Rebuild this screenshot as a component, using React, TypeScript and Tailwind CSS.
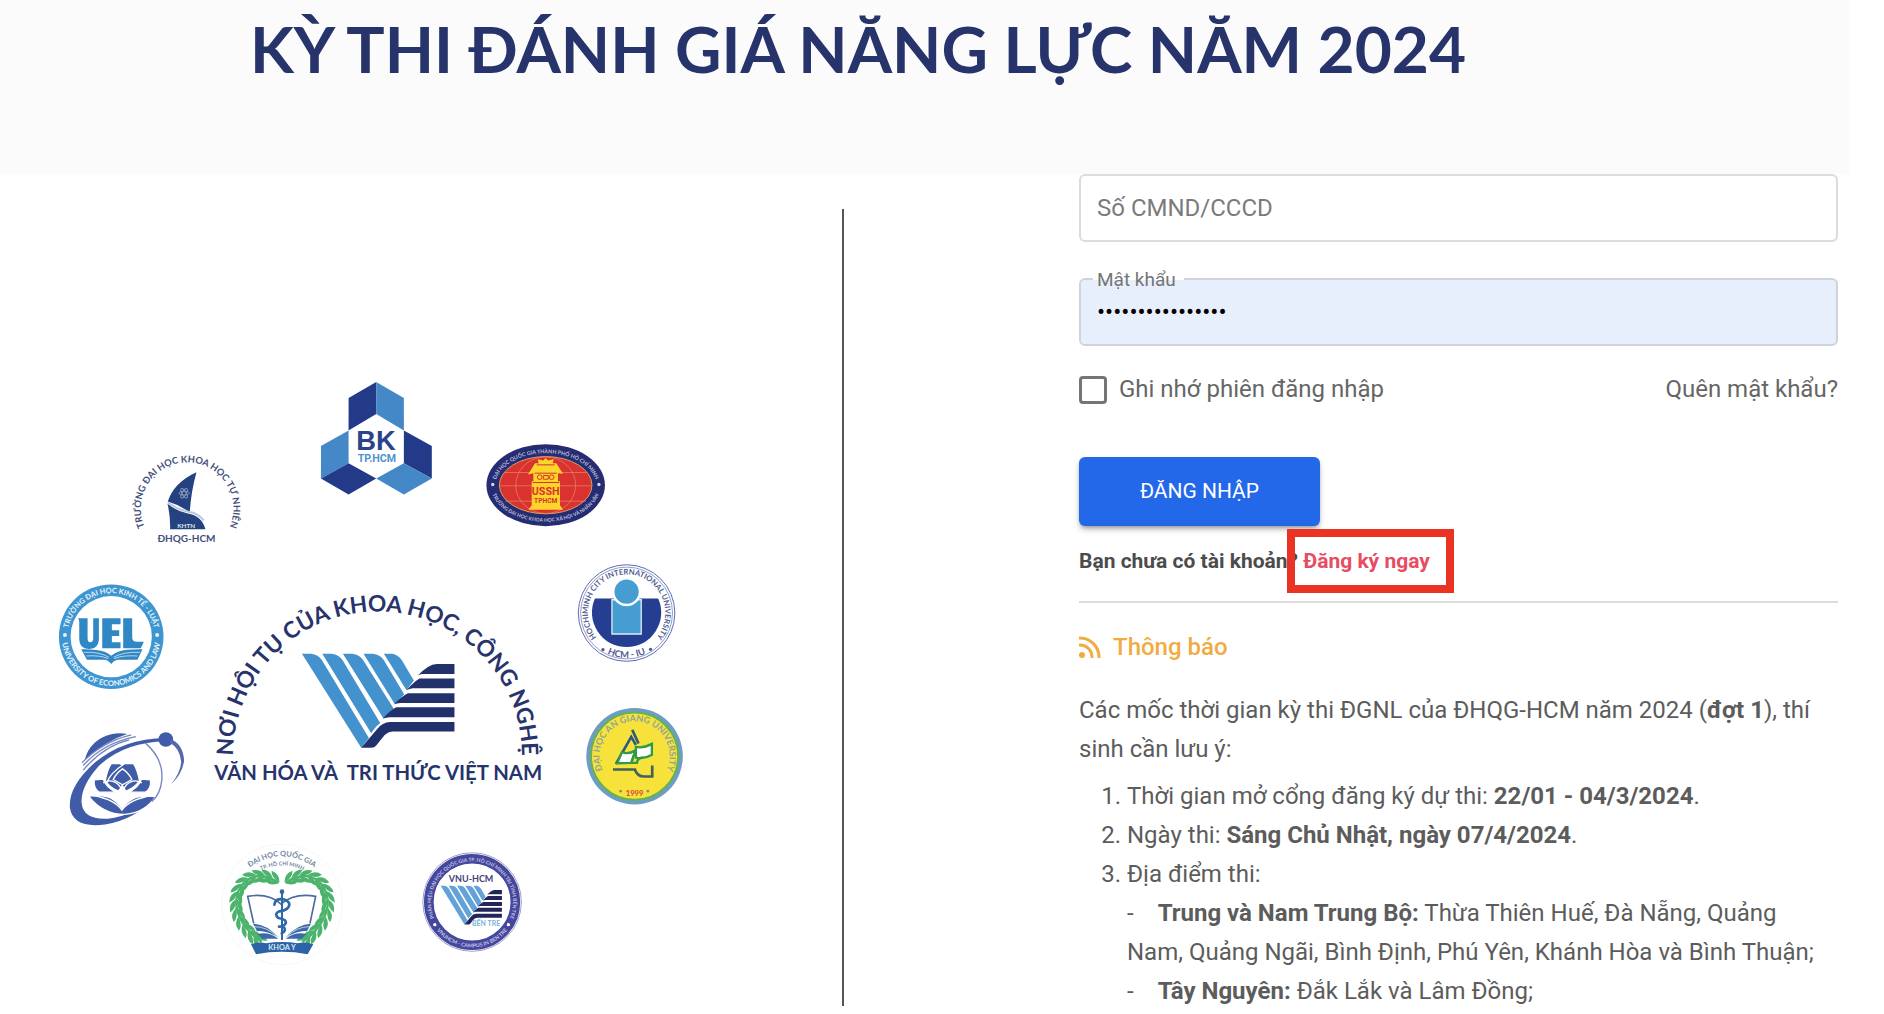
import { useState, type FormEvent, type ReactNode } from 'react';

interface PlaceProps {
  x: number;
  y: number;
  children: ReactNode;
}

// Every logo is drawn on a grid three times finer than the emblem board
function Place({ x, y, children }: PlaceProps) {
  return <g transform={`translate(${x} ${y}) scale(${1 / 3})`}>{children}</g>;
}

interface ArcTextProps {
  id: string;
  d: string;
  size: number;
  fill: string;
  children: string;
}

function ArcText({ id, d, size, fill, children }: ArcTextProps) {
  return (
    <>
      <path id={id} d={d} fill="none" />
      <text fontSize={size} fill={fill} fontWeight={700} textAnchor="middle">
        <textPath href={`#${id}`} startOffset="50%">{children}</textPath>
      </text>
    </>
  );
}

function VnuMark({ light = '#4391cd', dark = '#22306b' }: { light?: string; dark?: string }) {
  return (
    <>
      <g fill={light}>
        <path d="M307 252H334Q356 254 367 272L508 505L485 535Z" />
        <path d="M368 252H396Q418 254 429 272L542 460Q528 470 515 491Z" />
        <path d="M430 252H458Q480 254 491 272L584 420L552 447Z" />
        <path d="M492 252H520Q542 254 553 272L614 374L586 404Z" />
        <path d="M553 252H578Q596 255 607 272L643 333L621 362Z" />
      </g>
      <g fill={dark}>
        <path d="M655 318Q686 284 712 283H765V313H668Q662 314 655 318Z" />
        <path d="M621 362Q642 338 660 327H765V356H640Q630 357 621 362Z" />
        <path d="M584 404Q604 382 625 371H765V400H602Q592 401 584 404Z" />
        <path d="M550 447Q570 424 590 413H765V443H570Q560 444 550 447Z" />
        <path d="M485 535L533 478Q548 458 572 457H765V486H580Q560 488 550 503L530 528Q525 535 515 535Z" />
      </g>
    </>
  );
}

function BachKhoa() {
  return (
    <Place x={300} y={370}>
      <path d="M230 36L147 84V182L230 132Z" fill="#233a88" />
      <path d="M230 36L313 84V182L230 132Z" fill="#4488c8" />
      <path d="M64 228L147 182V280L64 326Z" fill="#4488c8" />
      <path d="M64 326L147 280L230 326L147 374Z" fill="#233a88" />
      <path d="M313 182L397 228V326L313 280Z" fill="#233a88" />
      <path d="M230 326L313 280L397 326L313 374Z" fill="#4488c8" />
      <text x="229" y="240" fontSize="82" fontWeight="700" fill="#2b4488" textAnchor="middle" fontFamily="Liberation Sans, sans-serif">BK</text>
      <text x="232" y="277" fontSize="32" fontWeight="700" fill="#4c93cc" textAnchor="middle" fontFamily="Roboto, sans-serif">TP.HCM</text>
    </Place>
  );
}

function NaturalSciences() {
  return (
    <Place x={110} y={430}>
      <ArcText id="khtn" d="M118 316A139 139 0 1 1 346 316" size={28} fill="#414e7c">TRƯỜNG ĐẠI HỌC KHOA HỌC TỰ NHIÊN</ArcText>
      <path d="M260 127Q192 158 174 215Q212 226 240 248Q243 190 260 127Z" fill="#24427f" />
      <path d="M173 222Q200 244 234 251Q276 258 287 298H181Q182 258 173 222Z" fill="#24427f" />
      <path d="M174 217Q200 238 236 246Q265 250 282 272" fill="none" stroke="#b9c6dc" strokeWidth="6" />
      <g fill="none" stroke="#8496ba" strokeWidth="3">
        <ellipse cx="223" cy="190" rx="16" ry="6" />
        <ellipse cx="223" cy="190" rx="16" ry="6" transform="rotate(60 223 190)" />
        <ellipse cx="223" cy="190" rx="16" ry="6" transform="rotate(120 223 190)" />
      </g>
      <text x="229" y="294" fontSize="19" fontWeight="700" fill="#dfe6f0" textAnchor="middle">KHTN</text>
      <text x="230" y="336" fontSize="30" fontWeight="700" fill="#414e7c" textAnchor="middle">ĐHQG-HCM</text>
    </Place>
  );
}

function SocialSciences() {
  return (
    <Place x={470} y={430}>
      <ellipse cx="229" cy="166" rx="178" ry="123" fill="#252c72" />
      <ellipse cx="229" cy="166" rx="139" ry="86" fill="#d9322f" stroke="#cfa16a" strokeWidth="3" />
      <g fill="none" stroke="#ea8b6c" strokeWidth="2">
        <ellipse cx="229" cy="166" rx="90" ry="85" />
        <path d="M105 128H353M91 168H367M108 214H350" />
      </g>
      <ArcText id="ussh-top" d="M78 166A151 96 0 0 1 380 166" size={16} fill="#b9bfdd">ĐẠI HỌC QUỐC GIA THÀNH PHỐ HỒ CHÍ MINH</ArcText>
      <ArcText id="ussh-bottom" d="M64 166A165 110 0 0 0 394 166" size={15} fill="#b9bfdd">TRƯỜNG ĐẠI HỌC KHOA HỌC XÃ HỘI VÀ NHÂN VĂN</ArcText>
      <circle cx="70" cy="164" r="5" fill="#d6d9ec" />
      <circle cx="389" cy="164" r="5" fill="#d6d9ec" />
      <path d="M205 88L222 92L229 84L236 92L253 88L250 100H261L281 132L266 130V154H272V226L281 240H177L187 226V154H192V130L176 134L197 100H208Z" fill="#fbd529" />
      <g fill="none" stroke="#d9322f" strokeWidth="3">
        <circle cx="211" cy="142" r="7" />
        <circle cx="247" cy="142" r="7" />
        <path d="M222 137H237V148H222ZM190 158H270M196 130H262M202 105H256" />
      </g>
      <text x="229" y="197" fontSize="32" fontWeight="700" fill="#d9322f" textAnchor="middle" fontFamily="Roboto, sans-serif">USSH</text>
      <text x="229" y="220" fontSize="20" fontWeight="700" fill="#d9322f" textAnchor="middle" fontFamily="Roboto, sans-serif">TPHCM</text>
    </Place>
  );
}

function International() {
  return (
    <Place x={560} y={550}>
      <circle cx="202" cy="190" r="145" fill="#fff" stroke="#5b6cb4" strokeWidth="3" />
      <circle cx="202" cy="190" r="138" fill="none" stroke="#5b6cb4" strokeWidth="2" />
      <path d="M107 146H297A104 104 0 1 1 107 146Z" fill="#263e91" />
      <path d="M158 150H246V253H158Z" fill="#469dd2" stroke="#d8edf5" strokeWidth="4" />
      <circle cx="202" cy="126" r="40" fill="#469dd2" stroke="#fff" strokeWidth="7" />
      <ArcText id="iu-top" d="M121 273A116 116 0 1 1 283 273" size={23} fill="#505b91">HOCHIMINH CITY INTERNATIONAL UNIVERSITY</ArcText>
      <ArcText id="iu-bottom" d="M100 278A134 134 0 0 0 304 278" size={28} fill="#505b91">HCM - IU</ArcText>
      <circle cx="131" cy="300" r="5" fill="#505b91" />
      <circle cx="274" cy="299" r="5" fill="#505b91" />
    </Place>
  );
}

function AnGiang() {
  return (
    <Place x={570} y={700}>
      <circle cx="196" cy="170" r="145" fill="#6c9dc6" />
      <circle cx="196" cy="170" r="131" fill="#f7e23b" stroke="#67b34a" strokeWidth="6" />
      <ArcText id="agu" d="M129 251A105 105 0 1 1 263 251" size={27} fill="#8fa598">ĐẠI HỌC AN GIANG UNIVERSITY</ArcText>
      <path d="M140 193L186 112L200 136" fill="none" stroke="#2d5b7a" strokeWidth="8" />
      <path d="M189 91L208 132" stroke="#2d5b7a" strokeWidth="8" />
      <path d="M144 191L158 158Q178 166 199 152L186 190Z" fill="#fff" stroke="#2f9a48" strokeWidth="7" />
      <path d="M200 142Q222 147 248 133V166Q225 180 200 174Z" fill="#fff" stroke="#2f9a48" strokeWidth="7" />
      <path d="M199 152L186 190H203Q205 174 222 174" fill="none" stroke="#2f9a48" strokeWidth="7" />
      <path d="M131 210H197Q204 231 224 231H249V198" fill="none" stroke="#44605a" strokeWidth="8" />
      <text x="196" y="289" fontSize="23" fontWeight="700" fill="#d5433a" textAnchor="middle">1999</text>
      <circle cx="154" cy="275" r="4" fill="#8c9158" />
      <circle cx="236" cy="275" r="4" fill="#8c9158" />
    </Place>
  );
}

function EconomicsLaw() {
  return (
    <Place x={40} y={570}>
      <circle cx="214" cy="201" r="157" fill="#3e96d1" />
      <circle cx="214" cy="201" r="122" fill="#fff" />
      <ArcText id="uel-top" d="M83 201A131 131 0 0 1 345 201" size={22} fill="#e7f3fa">TRƯỜNG ĐẠI HỌC KINH TẾ - LUẬT</ArcText>
      <ArcText id="uel-bottom" d="M66 201A148 148 0 0 0 362 201" size={23} fill="#e7f3fa">UNIVERSITY OF ECONOMICS AND LAW</ArcText>
      <circle cx="75" cy="196" r="6" fill="#e7f3fa" />
      <circle cx="352" cy="196" r="6" fill="#e7f3fa" />
      <path d="M114 146H143V205Q143 218 151 218Q160 218 160 205V146H177V206Q177 238 146 238Q118 238 118 208V157Q118 150 114 146Z" fill="#2f87c4" />
      <path d="M187 146H242V164H216V182H238V199H216V218H242V236H187Z" fill="#2f87c4" />
      <path d="M250 146H277V205Q278 216 290 216H312L303 236H250Z" fill="#2f87c4" />
      <path d="M124 239Q170 238 196 247Q206 252 214 258Q224 250 235 246Q260 238 308 239L293 270H232Q221 272 214 283Q207 272 195 270H141Z" fill="#2f87c4" />
      <path d="M132 248Q180 246 207 263M139 259Q180 256 205 267M300 248Q250 246 221 263M293 259Q248 256 223 267" fill="none" stroke="#fff" strokeWidth="2" />
    </Place>
  );
}

function Orbit() {
  return (
    <Place x={40} y={570}>
      <g fill="#405ba8">
        <path d="M134 572Q150 510 214 494Q238 489 262 493Q196 514 134 572Z" />
        <path d="M378 505Q250 506 164 580Q84 652 90 716Q100 778 196 765Q288 750 352 678Q280 740 204 748Q130 752 125 700Q122 650 178 588Q258 516 378 516Z" />
        <circle cx="378" cy="510" r="22" />
      </g>
      <g fill="#405ba8" stroke="#fff" strokeWidth="4">
        <path d="M163 631L190 629Q198 652 228 668H178Q160 656 163 631Z" />
        <path d="M332 631L305 629Q297 652 267 668H317Q335 656 332 631Z" />
        <path d="M214 582H240Q286 612 294 640Q276 662 247 668Q214 660 196 634Q202 600 214 582Z" />
        <path d="M281 582H255Q209 612 201 640Q219 662 248 668Q281 660 299 634Q293 600 281 582Z" />
        <path d="M248 598Q268 612 276 630L248 646L220 630Q228 612 248 598Z" />
        <path d="M190 640Q214 626 236 646L248 662L260 646Q282 626 306 640" fill="none" />
        <path d="M146 680Q198 674 219 690Q240 704 247 718Q256 702 276 690Q296 676 348 681Q316 730 256 735Q190 736 146 680Z" />
      </g>
      <path d="M247 642Q255 664 280 680Q256 690 247 716Q240 690 214 680Q240 664 247 642Z" fill="#fff" />
      <path d="M160 678Q225 690 246 722Q268 690 336 678" fill="none" stroke="#fff" strokeWidth="4" />
      <g fill="none" stroke="#7486c0" strokeWidth="4">
        <path d="M130 588Q190 520 288 501" />
        <path d="M130 602Q190 530 268 511" />
        <path d="M126 580Q186 518 274 496" />
        <path d="M316 520Q372 568 366 632Q362 674 336 696" />
      </g>
      <path d="M394 510Q430 524 433 574Q428 612 393 646Q424 606 424 576Q420 536 390 520Z" fill="#5367ac" />
    </Place>
  );
}

// Leaves along the left half of the laurel; the right half is mirrored
const LEAVES = [
  { x: 192, y: 120, r: 28 },
  { x: 170, y: 113, r: 10 },
  { x: 146, y: 111, r: -8 },
  { x: 122, y: 116, r: -26 },
  { x: 102, y: 130, r: -46 },
  { x: 88, y: 151, r: -64 },
  { x: 81, y: 175, r: -80 },
  { x: 80, y: 200, r: -94 },
  { x: 85, y: 225, r: -108 },
  { x: 96, y: 249, r: -120 },
  { x: 112, y: 270, r: -130 },
  { x: 130, y: 289, r: -136 },
  { x: 148, y: 303, r: -140 },
];

function Laurel() {
  return (
    <g fill="#4bb36c">
      <path d="M206 130Q150 92 106 126Q76 156 80 200Q90 262 156 308" fill="none" stroke="#4bb36c" strokeWidth="7" />
      {LEAVES.map((leaf) => (
        <g key={leaf.x + leaf.y} transform={`translate(${leaf.x} ${leaf.y}) rotate(${leaf.r})`}>
          <path d="M20 0Q8 -24 -18 -20Q-10 -2 20 0Z" />
          <path d="M20 2Q2 24 -20 16Q-8 0 20 2Z" />
        </g>
      ))}
    </g>
  );
}

function Medicine() {
  return (
    <Place x={210} y={840}>
      <circle cx="217" cy="195" r="181" fill="#fff" stroke="#f5f6f7" strokeWidth="3" />
      <ArcText id="y-top" d="M120 84Q217 16 314 84" size={22} fill="#6f85a0">ĐẠI HỌC QUỐC GIA</ArcText>
      <ArcText id="y-sub" d="M137 102Q217 54 298 102" size={16} fill="#6f85a0">TP. HỒ CHÍ MINH</ArcText>
      <Laurel />
      <g transform="translate(434 0) scale(-1 1)">
        <Laurel />
      </g>
      <path d="M132 252L114 171Q176 160 214 194Q254 160 318 171L301 252" fill="none" stroke="#4a6c9f" strokeWidth="5" />
      <path d="M130 253Q170 254 206 294Q164 272 142 276ZM144 284Q176 276 206 298H158Z" fill="#3a6aa9" />
      <path d="M304 253Q264 254 228 294Q270 272 292 276ZM290 284Q258 276 228 298H276Z" fill="#3a6aa9" />
      <path d="M134 262Q172 262 204 293M300 262Q262 262 230 293" fill="none" stroke="#fff" strokeWidth="2" />
      <path d="M217 158V302" stroke="#2f68a8" strokeWidth="6" />
      <circle cx="217" cy="157" r="7" fill="#2f68a8" />
      <path d="M194 196Q196 176 222 180Q246 188 236 204Q228 214 208 216Q192 224 206 236Q232 240 228 252Q222 262 208 262M224 266Q230 274 216 282" fill="none" stroke="#2f68a8" strokeWidth="8" strokeLinecap="round" />
      <path d="M124 315Q148 306 169 312Q217 304 264 312Q288 306 311 315L294 345Q217 330 139 345Z" fill="#2c62a6" />
      <text x="217" y="333" fontSize="22" fontWeight="700" fill="#dce8f4" textAnchor="middle">KHOA Y</text>
    </Place>
  );
}

function BenTre() {
  return (
    <Place x={210} y={840}>
      <circle cx="788" cy="188" r="148" fill="#fff" stroke="#6a6cb4" strokeWidth="2" />
      <circle cx="788" cy="188" r="130" fill="none" stroke="#45479c" strokeWidth="29" />
      <ArcText id="bt-top" d="M678 244A123 123 0 1 1 898 244" size={15} fill="#c3c4e6">PHÂN HIỆU ĐẠI HỌC QUỐC GIA TP. HỒ CHÍ MINH TẠI TỈNH BẾN TRE</ArcText>
      <ArcText id="bt-bottom" d="M666 247A135 135 0 0 0 910 247" size={16} fill="#c3c4e6">VNUHCM - CAMPUS IN BEN TRE</ArcText>
      <circle cx="676" cy="256" r="5" fill="#fff" />
      <circle cx="897" cy="256" r="5" fill="#fff" />
      <text x="785" y="127" fontSize="27" fontWeight="700" fill="#3f4379" textAnchor="middle">VNU-HCM</text>
      <g transform="translate(570 36) scale(0.402 0.41)">
        <VnuMark light="#62a2d8" dark="#22255a" />
      </g>
      <text x="830" y="259" fontSize="21" fontWeight="700" fill="#78b4d8" textAnchor="middle">BẾN TRE</text>
    </Place>
  );
}

function Emblem() {
  return (
    <Place x={200} y={570}>
      <ArcText id="motto" d="M100 575V559A434 434 0 0 1 968 559V575" size={68} fill="#27336b">NƠI HỘI TỤ CỦA KHOA HỌC, CÔNG NGHỆ</ArcText>
      <VnuMark />
      <text x="536" y="632" fontSize="61" fontWeight="700" fill="#27336b" textAnchor="middle">VĂN HÓA VÀ&nbsp; TRI THỨC VIỆT NAM</text>
    </Place>
  );
}

function LogoBoard() {
  return (
    <svg viewBox="0 360 843 620" className="w-full font-[Lato,sans-serif]" role="img" aria-label="Nơi hội tụ của khoa học, công nghệ">
      <BachKhoa />
      <NaturalSciences />
      <SocialSciences />
      <International />
      <AnGiang />
      <EconomicsLaw />
      <Orbit />
      <Medicine />
      <BenTre />
      <Emblem />
    </svg>
  );
}

function LoginForm() {
  const [idNumber, setIdNumber] = useState('');
  const [password, setPassword] = useState('matkhau-dgnl2024');
  const [remember, setRemember] = useState(false);

  const submit = (e: FormEvent) => {
    e.preventDefault();
  };

  return (
    <form onSubmit={submit}>
      <div className="relative">
        {/* sits in the box until something is typed */}
        {!idNumber && (
          <label htmlFor="idNumber" className="absolute inset-y-0 left-[18px] flex items-center text-[#7b7b7b]">
            Số CMND/CCCD
          </label>
        )}
        <input
          id="idNumber"
          type="text"
          value={idNumber}
          onChange={(e) => setIdNumber(e.target.value)}
          className="block h-[68px] w-full rounded-md border-2 border-[#dcdcdc] px-4 text-2xl focus:outline-none"
        />
      </div>
      <div className="relative mt-9">
        <label
          htmlFor="password"
          className="absolute -top-2.5 left-3.5 bg-linear-to-b from-white from-50% to-[#e8effc] to-50% pr-2 pl-1 text-[19px] leading-6 text-[#757575]"
        >
          Mật khẩu
        </label>
        <input
          id="password"
          type="password"
          value={password}
          onChange={(e) => setPassword(e.target.value)}
          className="block h-[68px] w-full rounded-md border-2 border-[#d0d4da] bg-[#e8effc] px-4 text-2xl text-black focus:outline-none"
        />
      </div>
      <div className="mt-6 flex items-center justify-between text-[#666]">
        <label className="flex items-center gap-3">
          <input
            type="checkbox"
            checked={remember}
            onChange={(e) => setRemember(e.target.checked)}
            className="size-7 appearance-none rounded-sm border-3 border-[#757575] checked:bg-[#2468ea]"
          />
          Ghi nhớ phiên đăng nhập
        </label>
        <a href="#forgot">Quên mật khẩu?</a>
      </div>
      <button type="submit" className="mt-12 h-[69px] w-[241px] rounded-md bg-[#2468ea] text-[21px] text-white shadow-md shadow-black/30">
        ĐĂNG NHẬP
      </button>
    </form>
  );
}

function Notice() {
  return (
    <section className="text-[#5c5c5c]">
      <h2 className="flex items-center gap-3 text-2xl leading-8 font-medium text-[#f0ac42]">
        <svg viewBox="0 0 22 22" className="size-[22px]" aria-hidden="true">
          <circle cx="3" cy="19" r="3" fill="currentColor" />
          <path d="M1 9A12 12 0 0 1 13 21M1 2A19 19 0 0 1 20 21" fill="none" stroke="currentColor" strokeWidth="3" strokeLinecap="round" />
        </svg>
        Thông báo
      </h2>
      <p className="mt-7">
        Các mốc thời gian kỳ thi ĐGNL của ĐHQG-HCM năm 2024 (<b>đợt 1</b>), thí sinh cần lưu ý:
      </p>
      <ol className="mt-2 list-decimal pl-12">
        <li>Thời gian mở cổng đăng ký dự thi: <b>22/01 - 04/3/2024</b>.</li>
        <li>Ngày thi: <b>Sáng Chủ Nhật, ngày 07/4/2024</b>.</li>
        <li>
          Địa điểm thi:
          <p><span className="mr-6">-</span><b>Trung và Nam Trung Bộ:</b> Thừa Thiên Huế, Đà Nẵng, Quảng Nam, Quảng Ngãi, Bình Định, Phú Yên, Khánh Hòa và Bình Thuận;</p>
          <p><span className="mr-6">-</span><b>Tây Nguyên:</b> Đắk Lắk và Lâm Đồng;</p>
        </li>
      </ol>
    </section>
  );
}

export default function App() {
  return (
    <div className="bg-white font-[Roboto,sans-serif] text-2xl leading-[39px]">
      <header className="mr-[35px] h-[174px] bg-[#fbfbfb] pl-[250px]">
        <h1 className="font-[Lato,sans-serif] text-[64px] leading-[98px] font-bold text-[#27336b]">
          KỲ THI ĐÁNH GIÁ NĂNG LỰC NĂM 2024
        </h1>
      </header>
      <main className="grid grid-cols-[minmax(0,844fr)_minmax(0,1040fr)]">
        <div className="mt-[35px] mb-[5px] border-r-2 border-[#555] pt-[151px]">
          <LogoBoard />
        </div>
        <div className="pr-[46px] pl-[235px]">
          <LoginForm />
          <p className="mt-4 border-b-2 border-[#dcdcdc] pb-5 text-[21px] leading-[39px] font-bold text-[#4c4c4c]">
            Bạn chưa có tài khoản?{' '}
            <span className="relative">
              <a href="#register" className="text-[#e84c62]">Đăng ký ngay</a>
              <span className="pointer-events-none absolute -top-5 -right-6 -bottom-5 -left-4 border-8 border-[#ea3323]" />
            </span>
          </p>
          <div className="mt-7">
            <Notice />
          </div>
        </div>
      </main>
    </div>
  );
}
